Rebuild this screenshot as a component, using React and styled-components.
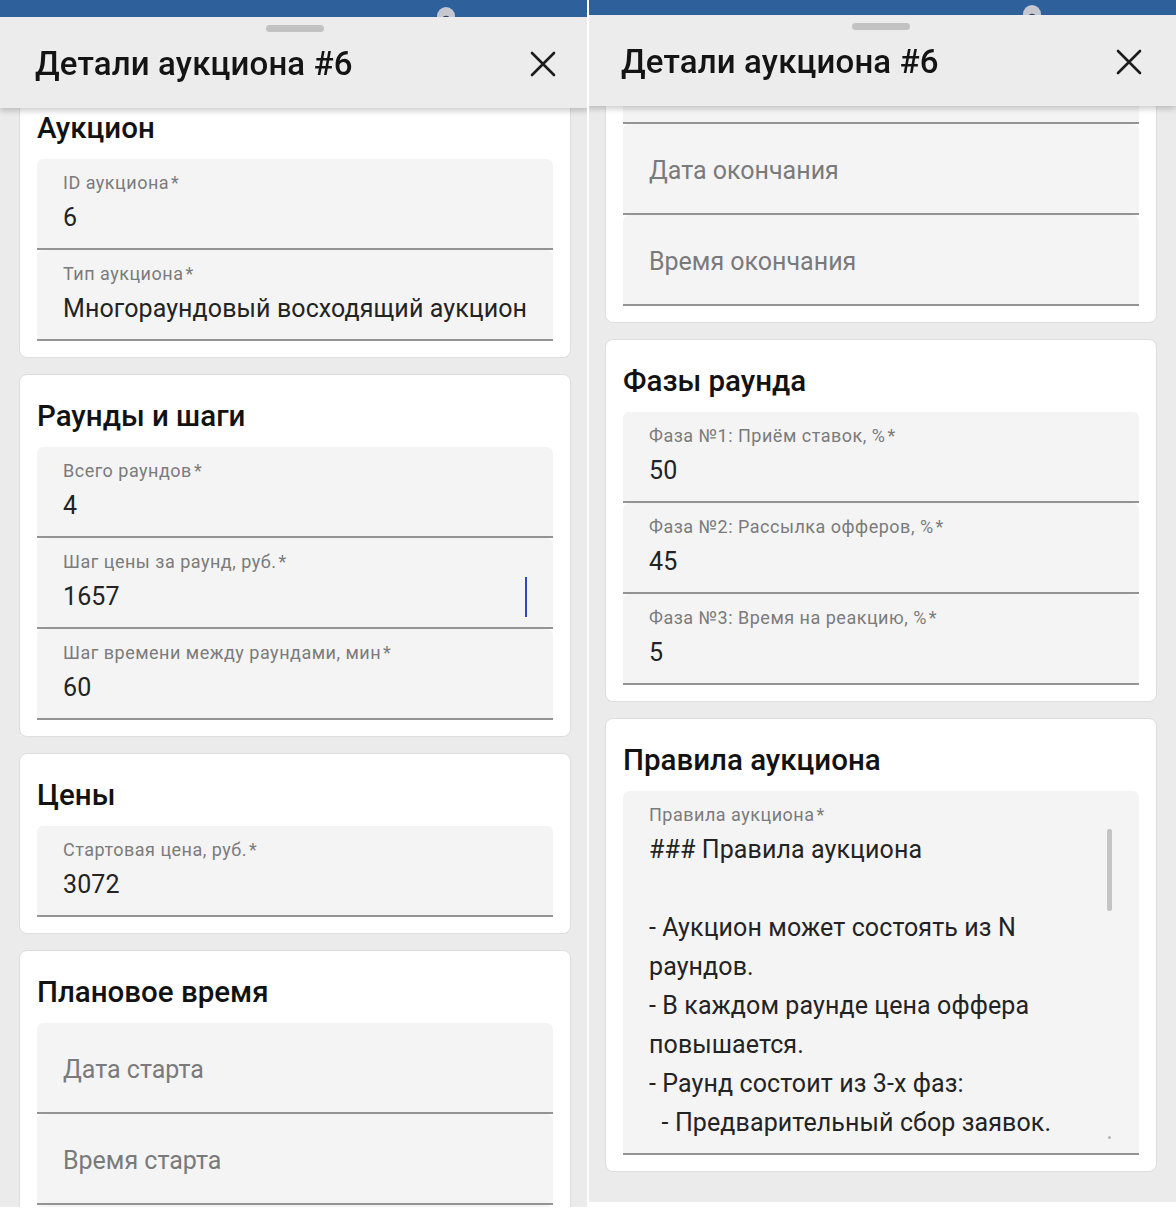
import React, { useLayoutEffect, useRef } from "react";
import styled, { createGlobalStyle } from "styled-components";

const GlobalStyle = createGlobalStyle`
  html, body { margin: 0; padding: 0; background: #ffffff; }
  body {
    font-family: Roboto, "Noto Sans", "Liberation Sans", sans-serif;
    -webkit-font-smoothing: antialiased;
  }
  * { box-sizing: border-box; }
`;

const Page = styled.div`
  display: flex;
  gap: 2px;
  width: 1176px;
  height: 1212px;
  background: #ffffff;
  overflow: hidden;
`;

/* Window onto one phone screen; the screen inside may be cropped at its top/left edge */
const Frame = styled.div`
  flex: none;
  width: 587px;
  height: ${(p) => p.$height}px;
  overflow: hidden;
  background: #ebebeb;
`;

const Screen = styled.div`
  width: 590px;
  height: 1212px;
  margin: ${(p) => `${-p.$cropTop}px 0 0 ${-p.$cropLeft}px`};
  display: flex;
  flex-direction: column;
  background: #ebebeb;
`;

const StatusBar = styled.div`
  flex: none;
  height: 17px;
  background: #2e609c;
  display: flex;
  justify-content: flex-end;
  padding-right: 135px;
  overflow: hidden;
`;

const Avatar = styled.div`
  width: 18px;
  height: 18px;
  margin-top: 7px;
  border-radius: 50%;
  background: radial-gradient(circle at 50% 72%, #34465f 0 4px, #c5c8ce 4.6px);
`;

const Scroller = styled.div`
  flex: 1;
  min-height: 0;
  overflow: hidden;
  position: relative;
`;

const Header = styled.header`
  position: sticky;
  top: 0;
  z-index: 2;
  height: 91px;
  background: #ececec;
  box-shadow: 0 3px 6px rgba(0, 0, 0, 0.2);
  display: flex;
  flex-direction: column;
`;

const Handle = styled.div`
  width: 58px;
  height: 7px;
  margin: 8px auto 0;
  border-radius: 4px;
  background: #c2c2c2;
`;

const TitleRow = styled.div`
  flex: 1;
  display: flex;
  align-items: center;
  justify-content: space-between;
  padding: 0 34px 12px 35px;
`;

const Title = styled.h1`
  margin: 0;
  font-size: 33px;
  line-height: 38px;
  font-weight: 500;
  color: #141414;
  letter-spacing: 0.15px;
`;

const CloseButton = styled.button`
  border: 0;
  padding: 0;
  background: transparent;
  width: 26px;
  height: 26px;
  display: flex;
  align-items: center;
  justify-content: center;
  color: #1c1c1c;
`;

const Content = styled.div`
  display: flex;
  flex-direction: column;
  gap: 16px;
  padding: 16px 19px 48px;
`;

const Card = styled.section`
  background: #ffffff;
  border: 1px solid #dedede;
  border-radius: 8px;
  padding: 25px 17px 16px;
`;

const CardTitle = styled.h2`
  margin: 0 0 15px;
  font-size: 29.5px;
  line-height: 32px;
  font-weight: 500;
  color: #121212;
`;

const Field = styled.div`
  position: relative;
  min-height: 91px;
  background: #f4f4f4;
  border-radius: 6px 6px 0 0;
  border-bottom: 2px solid #949494;
  padding: ${(p) => (p.$empty ? "4px 26px 0" : p.$multiline ? "14px 50px 11px 26px" : "14px 26px 11px")};
  display: flex;
  flex-direction: column;
  justify-content: ${(p) => (p.$empty ? "center" : "flex-start")};
`;

const Label = styled.div`
  font-size: 18px;
  line-height: 20px;
  letter-spacing: 0.5px;
  color: #7b7b7b;
  white-space: nowrap;
`;

const Star = styled.span`
  margin-left: 2px;
`;

const Value = styled.div`
  margin-top: 5px;
  font-size: 25px;
  line-height: 39px;
  letter-spacing: 0.1px;
  color: #232323;
  white-space: ${(p) => (p.$multiline ? "pre-wrap" : "nowrap")};
  height: ${(p) => (p.$multiline ? "312px" : "auto")};
  overflow: ${(p) => (p.$multiline ? "hidden" : "visible")};
`;

const Placeholder = styled.div`
  font-size: 25px;
  line-height: 39px;
  color: #7a7a7a;
`;

const Caret = styled.span`
  position: absolute;
  right: 26px;
  top: 39px;
  width: 2px;
  height: 40px;
  background: #3446bf;
`;

const ScrollThumb = styled.span`
  position: absolute;
  right: 27px;
  top: 38px;
  width: 5px;
  height: 82px;
  border-radius: 2px;
  background: #c4c4c4;
`;

const ResizeDot = styled.span`
  position: absolute;
  right: 28px;
  bottom: 14px;
  width: 3px;
  height: 3px;
  border-radius: 50%;
  background: #b5b5b5;
`;

const RULES = [
  "### Правила аукциона",
  "",
  "- Аукцион может состоять из N раундов.",
  "- В каждом раунде цена оффера повышается.",
  "- Раунд состоит из 3-х фаз:",
  "  - Предварительный сбор заявок.",
  "  - Рассылка офферов.",
  "  - Время на реакцию.",
].join("\n");

const SECTIONS = [
  {
    title: "Аукцион",
    fields: [
      { label: "ID аукциона", value: "6" },
      { label: "Тип аукциона", value: "Многораундовый восходящий аукцион" },
    ],
  },
  {
    title: "Раунды и шаги",
    fields: [
      { label: "Всего раундов", value: "4" },
      { label: "Шаг цены за раунд, руб.", value: "1657", focused: true },
      { label: "Шаг времени между раундами, мин", value: "60" },
    ],
  },
  {
    title: "Цены",
    fields: [{ label: "Стартовая цена, руб.", value: "3072" }],
  },
  {
    title: "Плановое время",
    fields: [
      { placeholder: "Дата старта" },
      { placeholder: "Время старта" },
      { placeholder: "Дата окончания" },
      { placeholder: "Время окончания" },
    ],
  },
  {
    title: "Фазы раунда",
    fields: [
      { label: "Фаза №1: Приём ставок, %", value: "50" },
      { label: "Фаза №2: Рассылка офферов, %", value: "45" },
      { label: "Фаза №3: Время на реакцию, %", value: "5" },
    ],
  },
  {
    title: "Правила аукциона",
    fields: [{ label: "Правила аукциона", value: RULES, multiline: true }],
  },
];

function CloseIcon() {
  return (
    <svg width="26" height="26" viewBox="0 0 26 26" fill="none">
      <path d="M2 2 L24 24 M24 2 L2 24" stroke="currentColor" strokeWidth="2.6" strokeLinecap="round" />
    </svg>
  );
}

function FormField({ field }) {
  if (field.placeholder) {
    return (
      <Field $empty>
        <Placeholder>{field.placeholder}</Placeholder>
      </Field>
    );
  }
  return (
    <Field $multiline={field.multiline}>
      <Label>
        {field.label}
        <Star>*</Star>
      </Label>
      <Value $multiline={field.multiline}>{field.value}</Value>
      {field.focused && <Caret />}
      {field.multiline && <ScrollThumb />}
      {field.multiline && <ResizeDot />}
    </Field>
  );
}

function AuctionSheet({ scroll }) {
  const ref = useRef(null);
  useLayoutEffect(() => {
    if (ref.current) ref.current.scrollTop = scroll;
  }, [scroll]);

  return (
    <Scroller ref={ref}>
      <Header>
        <Handle />
        <TitleRow>
          <Title>Детали аукциона #6</Title>
          <CloseButton aria-label="Закрыть">
            <CloseIcon />
          </CloseButton>
        </TitleRow>
      </Header>
      <Content>
        {SECTIONS.map((section) => (
          <Card key={section.title}>
            <CardTitle>{section.title}</CardTitle>
            {section.fields.map((f, i) => (
              <FormField key={i} field={f} />
            ))}
          </Card>
        ))}
      </Content>
    </Scroller>
  );
}

function Phone({ height, cropTop, cropLeft, scroll }) {
  return (
    <Frame $height={height}>
      <Screen $cropTop={cropTop} $cropLeft={cropLeft}>
        <StatusBar>
          <Avatar />
        </StatusBar>
        <AuctionSheet scroll={scroll} />
      </Screen>
    </Frame>
  );
}

export default function App() {
  return (
    <>
      <GlobalStyle />
      <Page>
        <Phone height={1207} cropTop={0} cropLeft={0} scroll={38} />
        <Phone height={1202} cropTop={2} cropLeft={3} scroll={1117} />
      </Page>
    </>
  );
}
